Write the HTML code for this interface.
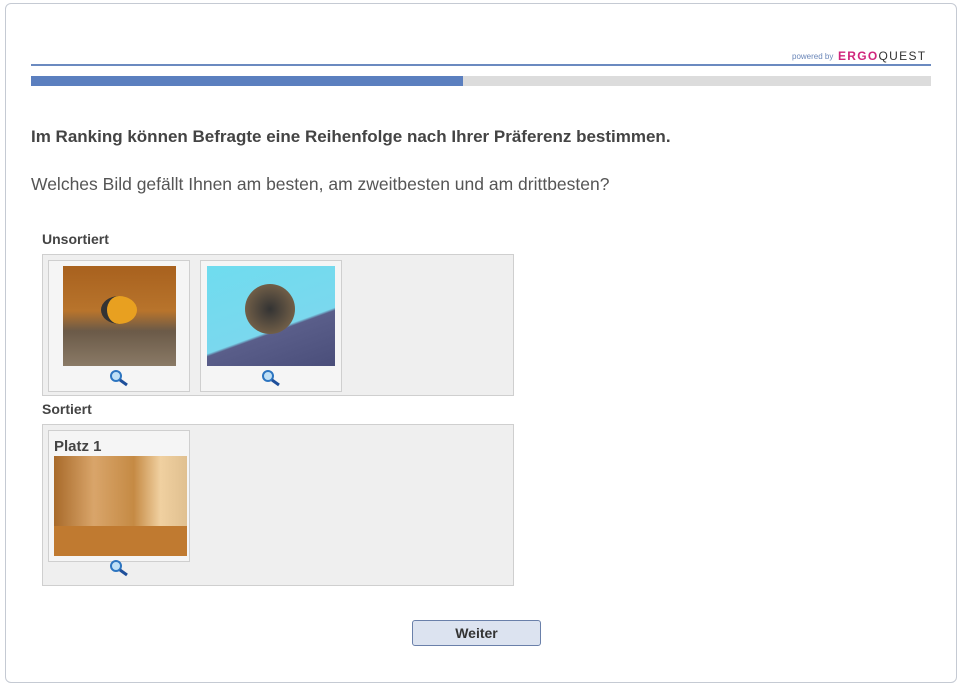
<!DOCTYPE html>
<html><head><meta charset="utf-8"><style>
body{margin:0;width:961px;height:687px;background:#fff;font-family:"Liberation Sans",sans-serif;position:relative;overflow:hidden}
.a{position:absolute}
.frame{left:5px;top:3px;width:950px;height:678px;border:1px solid #c5cad3;border-radius:6px}
.box{background:#efefef;border:1px solid #cfcfcf}
.card{background:#f5f5f5;border:1px solid #cfcfcf}
.lbl{font-weight:bold;font-size:14px;color:#444}
.mag{width:20px;height:18px}
</style></head><body>
<div class="a frame"></div>
<div class="a" style="left:792px;top:52px;font-size:8px;color:#6a86b8">powered by</div>
<div class="a" style="left:838px;top:49px;font-size:12px;letter-spacing:1.3px;font-weight:bold"><span style="color:#d0257c">ERGO</span><span style="color:#333;font-weight:normal">QUEST</span></div>
<div class="a" style="left:31px;top:64px;width:900px;height:2px;background:#6b8ac0"></div>
<div class="a" style="left:31px;top:76px;width:900px;height:10px;background:#dcdcdc"></div>
<div class="a" style="left:31px;top:76px;width:432px;height:10px;background:#5b7fbf"></div>
<div class="a" style="left:31px;top:127px;font-size:17px;font-weight:bold;color:#444">Im Ranking können Befragte eine Reihenfolge nach Ihrer Präferenz bestimmen.</div>
<div class="a" style="left:31px;top:174px;font-size:17.5px;color:#555">Welches Bild gefällt Ihnen am besten, am zweitbesten und am drittbesten?</div>
<div class="a lbl" style="left:42px;top:231px">Unsortiert</div>
<div class="a box" style="left:42px;top:254px;width:470px;height:140px"></div>
<div class="a card" style="left:48px;top:260px;width:140px;height:130px"></div>
<div class="a" style="left:63px;top:266px;width:113px;height:100px;background:linear-gradient(180deg,#a8611e 0%,#b8742c 45%,#6b5a48 65%,#8a7a66 100%)"><div class="a" style="left:38px;top:30px;width:30px;height:28px;border-radius:50%;background:#e8a020;border-left:6px solid #333"></div></div>
<div class="a card" style="left:200px;top:260px;width:140px;height:130px"></div>
<div class="a" style="left:207px;top:266px;width:128px;height:100px;background:linear-gradient(160deg,#6fdcef 0%,#7ad8ee 60%,#5a5e8a 62%,#4a4e7a 100%)"><div class="a" style="left:38px;top:18px;width:50px;height:50px;border-radius:50%;background:radial-gradient(#333,#8a7050)"></div></div>
<svg class="a mag" style="left:109px;top:369px" viewBox="0 0 20 18"><circle cx="7" cy="7" r="5" fill="#bfe0f6" stroke="#2d75c0" stroke-width="2"/><line x1="11" y1="11" x2="18" y2="16" stroke="#1e4f9a" stroke-width="3"/></svg>
<svg class="a mag" style="left:261px;top:369px" viewBox="0 0 20 18"><circle cx="7" cy="7" r="5" fill="#bfe0f6" stroke="#2d75c0" stroke-width="2"/><line x1="11" y1="11" x2="18" y2="16" stroke="#1e4f9a" stroke-width="3"/></svg>
<div class="a lbl" style="left:42px;top:401px">Sortiert</div>
<div class="a box" style="left:42px;top:424px;width:470px;height:160px"></div>
<div class="a card" style="left:48px;top:430px;width:140px;height:130px"></div>
<div class="a lbl" style="left:54px;top:438px;font-size:15px">Platz 1</div>
<div class="a" style="left:54px;top:456px;width:133px;height:100px;background:linear-gradient(90deg,#a86a2a 0%,#d9a56a 30%,#c58a44 60%,#f0d0a0 80%,#e0c090 100%)"><div class="a" style="left:0;top:70px;width:133px;height:30px;background:#c07a30"></div></div>
<svg class="a mag" style="left:109px;top:559px" viewBox="0 0 20 18"><circle cx="7" cy="7" r="5" fill="#bfe0f6" stroke="#2d75c0" stroke-width="2"/><line x1="11" y1="11" x2="18" y2="16" stroke="#1e4f9a" stroke-width="3"/></svg>
<div class="a" style="left:412px;top:620px;width:127px;height:24px;background:#dce3f0;border:1px solid #6a80aa;border-radius:3px;text-align:center;line-height:24px;font-weight:bold;font-size:14px;color:#333">Weiter</div>
</body></html>
